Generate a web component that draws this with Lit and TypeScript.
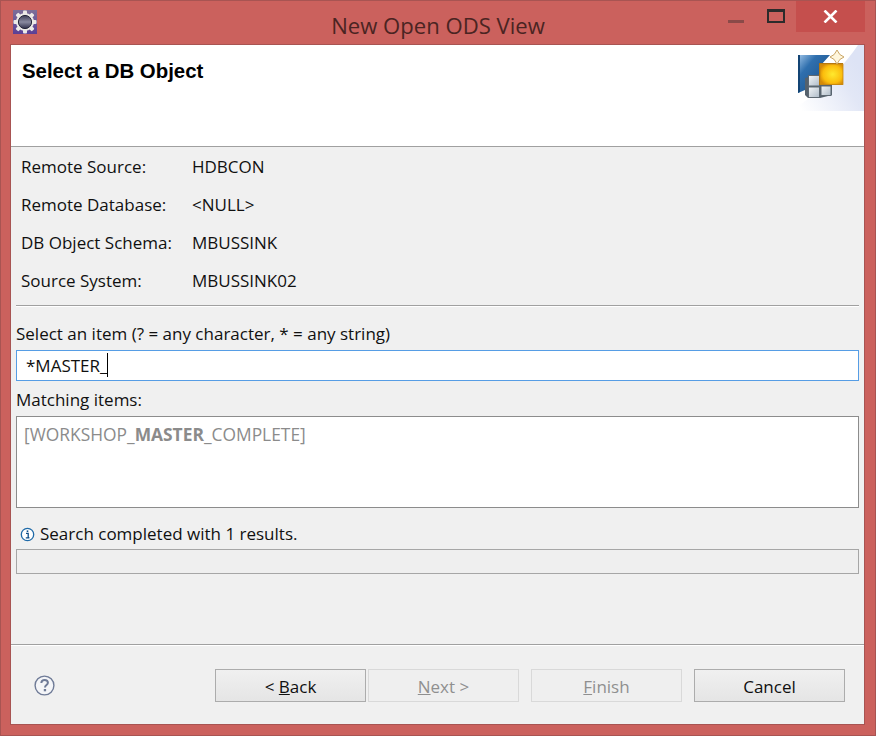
import { LitElement, html, css } from "lit";
import { customElement } from "lit/decorators.js";

const infoRows = [
  ["Remote Source:", "HDBCON"],
  ["Remote Database:", "<NULL>"],
  ["DB Object Schema:", "MBUSSINK"],
  ["Source System:", "MBUSSINK02"],
];

@customElement("app-root")
export class AppRoot extends LitElement {
  static styles = css`
    :host {
      display: block;
      width: 876px;
      height: 736px;
      font: 400 17px/22px "Open Sans", "Noto Sans", sans-serif;
      color: #101010;
    }

    .frame {
      box-sizing: border-box;
      width: 876px;
      height: 736px;
      display: flex;
      flex-direction: column;
      background: #cb615d;
      border: 1px solid #a85452;
      padding: 0 10px 10px 9px;
    }

    .titlebar {
      height: 43px;
      flex: none;
      display: grid;
      grid-template-columns: 1fr auto 1fr;
      margin: 0 -10px 0 -9px;
    }
    .app-icon {
      margin: 9px 0 0 12px;
      width: 24px;
      height: 24px;
      display: block;
    }
    .title {
      font-size: 22.1px;
      line-height: 28px;
      padding-top: 10px;
      color: #4a2422;
    }
    .controls {
      display: flex;
      justify-content: flex-end;
      align-items: flex-start;
      margin-right: 10px;
    }
    .ctl {
      height: 31px;
      display: flex;
      align-items: flex-start;
      justify-content: center;
    }
    .ctl.min {
      width: 16px;
      margin-right: 23px;
    }
    .ctl.min i {
      display: block;
      flex: none;
      width: 16px;
      height: 3px;
      margin-top: 19px;
      background: #8a4a48;
    }
    .ctl.max {
      width: 18px;
      margin-right: 11px;
    }
    .ctl.max i {
      display: block;
      flex: none;
      box-sizing: border-box;
      width: 18px;
      height: 14px;
      margin-top: 8px;
      border: 2px solid #2b2b2b;
      border-top-width: 3px;
    }
    .ctl.close {
      width: 69px;
      background: #c54f4d;
    }
    .ctl.close svg {
      margin-top: 9px;
    }

    .dialog {
      flex: 1;
      display: flex;
      flex-direction: column;
      background: #f0f0f0;
      border: 1px solid #a85452;
      min-height: 0;
    }

    .banner {
      height: 101px;
      flex: none;
      background: #fff;
      border-bottom: 1px solid #a0a0a0;
      display: flex;
      justify-content: space-between;
      align-items: flex-start;
    }
    .banner h1 {
      margin: 14px 0 0 11px;
      font: 700 20.4px/24px "Liberation Sans", Arial, sans-serif;
      color: #000;
    }
    .banner svg {
      display: block;
    }

    .body {
      padding: 0 5px;
      flex: 1;
      display: flex;
      flex-direction: column;
    }

    .info {
      display: grid;
      grid-template-columns: 171px 1fr;
      grid-auto-rows: 38px;
      align-items: center;
      padding: 1px 0 0 5px;
      margin-bottom: 5px;
    }

    .rule {
      height: 1px;
      background: #a0a0a0;
      box-shadow: 0 1px 0 #fff;
      flex: none;
    }

    .label {
      height: 22px;
      margin-top: 8px;
    }
    .info + .rule + .label {
      margin-top: 17px;
    }

    .input {
      box-sizing: border-box;
      height: 31px;
      margin-top: 5px;
      border: 1px solid #569de5;
      background: #fff;
      padding: 4px 0 0 9px;
      display: flex;
    }
    .caret {
      width: 1px;
      height: 24px;
      margin-top: -2px;
      background: #000;
    }

    .list {
      box-sizing: border-box;
      height: 92px;
      margin-top: 5px;
      border: 1px solid #8c8c8c;
      background: #fff;
      padding: 6px 0 0 7px;
      font-size: 17.4px;
      color: #8b8b8b;
    }

    .status {
      display: flex;
      align-items: center;
      gap: 5px;
      height: 22px;
      margin-top: 15px;
      padding-left: 4px;
    }

    .progress {
      box-sizing: border-box;
      height: 25px;
      margin-top: 4px;
      border: 1px solid #a6a6a6;
      background: #efefef;
    }

    .footer {
      box-sizing: border-box;
      flex: none;
      height: 80px;
      border-top: 1px solid #a0a0a0;
      box-shadow: inset 0 1px 0 #fff;
      display: flex;
      align-items: flex-start;
      padding: 24px 19px 0 23px;
    }
    .help {
      display: block;
      margin-top: 6px;
    }
    .buttons {
      margin-left: auto;
      display: flex;
    }
    .btn {
      box-sizing: border-box;
      width: 151px;
      height: 33px;
      padding-top: 2px;
      display: flex;
      align-items: center;
      justify-content: center;
      border: 1px solid #acacac;
      background: linear-gradient(#f0f0f0, #e5e5e5);
      color: #101010;
    }
    .btn.off {
      border-color: #d9d9d9;
      background: #efefef;
      color: #8f8f8f;
    }
    .btn + .btn {
      margin-left: 12px;
    }
    .btn.tight {
      margin-left: 2px;
    }
  `;

  private gearIcon() {
    return html`<svg class="app-icon" viewBox="0 0 24 24">
      <defs>
        <linearGradient id="gbg" x1="0" y1="0" x2="0" y2="1">
          <stop offset="0" stop-color="#7d6f98" />
          <stop offset="1" stop-color="#5b3f96" />
        </linearGradient>
        <linearGradient id="ghub" x1="0" y1="0" x2="0" y2="1">
          <stop offset="0" stop-color="#3d3d55" />
          <stop offset="0.5" stop-color="#8a8aa0" />
          <stop offset="1" stop-color="#2f2f4a" />
        </linearGradient>
      </defs>
      <rect width="24" height="24" fill="url(#gbg)" />
      <g fill="#eceae6">
        <circle cx="12" cy="12" r="9" />
        <rect x="10" y="0.5" width="4" height="23" rx="1" />
        <rect x="0.5" y="10" width="23" height="4" rx="1" />
        <rect x="10" y="0.5" width="4" height="23" rx="1" transform="rotate(45 12 12)" />
        <rect x="10" y="0.5" width="4" height="23" rx="1" transform="rotate(-45 12 12)" />
      </g>
      <circle cx="12" cy="12" r="6.6" fill="url(#ghub)" stroke="#26263a" stroke-width="1" />
    </svg>`;
  }

  private bannerIcon() {
    return html`<svg width="74" height="66" viewBox="0 0 74 66">
      <defs>
        <linearGradient id="bbg" x1="0" y1="1" x2="1" y2="0.45">
          <stop offset="0.12" stop-color="#ffffff" />
          <stop offset="0.75" stop-color="#e2e7f6" />
          <stop offset="1" stop-color="#dde3f5" />
        </linearGradient>
        <linearGradient id="bblue" x1="0" y1="0" x2="1" y2="1">
          <stop offset="0" stop-color="#9cc2e6" />
          <stop offset="0.3" stop-color="#2f6fae" />
          <stop offset="1" stop-color="#174a80" />
        </linearGradient>
        <radialGradient id="byel" cx="0.55" cy="0.5" r="0.6">
          <stop offset="0" stop-color="#ffe92e" />
          <stop offset="0.7" stop-color="#fbbd0d" />
          <stop offset="1" stop-color="#d68a08" />
        </radialGradient>
        <linearGradient id="bcell" x1="0" y1="0" x2="1" y2="1">
          <stop offset="0" stop-color="#f4f6f8" />
          <stop offset="1" stop-color="#aebbc8" />
        </linearGradient>
      </defs>
      <path d="M0 66H74V0H68C60 12 30 50 0 66Z" fill="url(#bbg)" />
      <path d="M8 10H40L31 20V33L15 40V45L8 48Z" fill="url(#bblue)" />
      <path d="M8 10V48L10 47V10Z" fill="#134474" />
      <path d="M15 33L30 29H42V50L30 53H18L15 50Z" fill="#55616c" />
      <rect x="18.5" y="30.5" width="11" height="10.5" fill="url(#bcell)" stroke="#5d6872" />
      <rect x="18.5" y="42" width="11" height="10.5" fill="url(#bcell)" stroke="#5d6872" />
      <rect x="31" y="41" width="10" height="9.5" fill="url(#bcell)" stroke="#5d6872" />
      <rect x="29" y="18" width="24" height="22" fill="#a86a10" />
      <rect x="30" y="19" width="23" height="20.5" fill="url(#byel)" stroke="#c98a12" stroke-width="0.8" />
      <path d="M47 5L49.8 9.5L54 12L49.8 14.5L47 19L44.2 14.5L40 12L44.2 9.5Z" fill="#fff6dc" stroke="#c9a566" stroke-width="1" />
    </svg>`;
  }

  render() {
    return html`
      <div class="frame">
        <div class="titlebar">
          ${this.gearIcon()}
          <div class="title">New Open ODS View</div>
          <div class="controls">
            <div class="ctl min"><i></i></div>
            <div class="ctl max"><i></i></div>
            <div class="ctl close">
              <svg width="15" height="13" viewBox="0 0 15 13">
                <path d="M1.5 0.5L13.5 12.5M13.5 0.5L1.5 12.5" stroke="#fff" stroke-width="2.6" fill="none" />
              </svg>
            </div>
          </div>
        </div>

        <div class="dialog">
          <div class="banner">
            <h1>Select a DB Object</h1>
            ${this.bannerIcon()}
          </div>
          <div class="body">
            <div class="info">
              ${infoRows.map(
                ([k, v]) => html`<div>${k}</div><div>${v}</div>`
              )}
            </div>
            <div class="rule"></div>
            <div class="label">Select an item (? = any character, * = any string)</div>
            <div class="input"><span>*MASTER_</span><span class="caret"></span></div>
            <div class="label">Matching items:</div>
            <div class="list">[WORKSHOP_<b>MASTER</b>_COMPLETE]</div>
            <div class="status">
              <svg width="15" height="15" viewBox="0 0 15 15">
                <circle cx="7.5" cy="7.5" r="6.2" fill="#fff" stroke="#1f6aa8" stroke-width="1.3" />
                <path d="M6 6.4H8.2V10.6H9.4M5.8 10.8H9.4" stroke="#0f4f8a" stroke-width="1.3" fill="none" />
                <rect x="6.7" y="3.4" width="1.6" height="1.6" fill="#0f4f8a" />
              </svg>
              <span>Search completed with 1 results.</span>
            </div>
            <div class="progress"></div>
          </div>
          <div class="footer">
            <svg class="help" width="21" height="21" viewBox="0 0 21 21">
              <circle cx="10.5" cy="10.5" r="9.4" fill="#f4f5f8" stroke="#6f7b97" stroke-width="1.4" />
              <path d="M7.3 8C7.5 5.8 9 5 10.6 5C12.6 5 13.9 6.2 13.9 7.8C13.9 10 11 10 11 12.4" stroke="#6f7b97" stroke-width="2" fill="none" />
              <rect x="9.8" y="14" width="2.3" height="2.3" fill="#6f7b97" />
            </svg>
            <div class="buttons">
              <div class="btn">&lt;&nbsp;<u>B</u>ack</div>
              <div class="btn off tight"><u>N</u>ext&nbsp;&gt;</div>
              <div class="btn off"><u>F</u>inish</div>
              <div class="btn">Cancel</div>
            </div>
          </div>
        </div>
      </div>
    `;
  }
}
